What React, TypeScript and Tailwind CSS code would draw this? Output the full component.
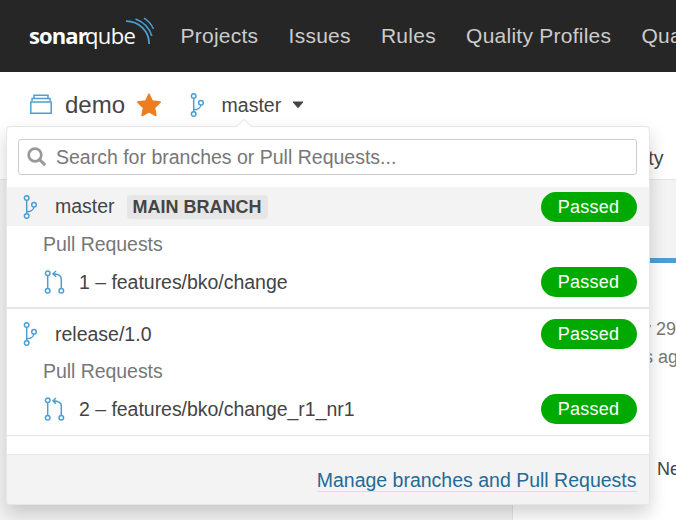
import React from "react";

const font = "font-['Liberation_Sans',Arial,sans-serif]";

function BranchIcon() {
  return (
    <svg width="24" height="24" viewBox="0 0 24 24" fill="none" stroke="#4b9fd5" strokeWidth="1.5" className="shrink-0">
      <circle cx="7.7" cy="3" r="2.3" />
      <circle cx="15" cy="9.7" r="2.3" />
      <circle cx="7.7" cy="21" r="2.3" />
      <path d="M7.7 5.3V18.7M14.9 12C14.6 15 11 16.7 7.7 16.8" />
    </svg>
  );
}

function PullRequestIcon() {
  return (
    <svg width="24" height="24" viewBox="0 0 24 24" fill="none" stroke="#4b9fd5" strokeWidth="1.5" className="shrink-0">
      <circle cx="5.7" cy="3.3" r="2.3" />
      <circle cx="5.7" cy="20.7" r="2.3" />
      <circle cx="19.3" cy="20.7" r="2.3" />
      <path d="M5.7 5.6V18.4M19.3 18.4V9.2C19.3 5.5 16.5 4 11 3.8M14 1L11 3.8L14 6.7" />
    </svg>
  );
}

function Logo() {
  return (
    <div className="relative h-[40px] w-[128px] shrink-0 text-[22px] leading-[43px] text-white font-['Open_Sans','Noto_Sans',sans-serif]">
      <div className="flex">
        <span className="w-[56px] font-bold tracking-[-0.9px]">sonar</span>
        <span className="tracking-[-0.6px]">qube</span>
      </div>
      <svg className="absolute left-[96px] top-[2px]" width="30" height="30" viewBox="0 0 30 30" fill="none" stroke="#4b9fd5">
        <path d="M1 5.2C14 5.2 24 15 24.2 28" strokeWidth="1.8" />
        <path d="M10.5 3C18.5 6 24.5 12 26.8 20" strokeWidth="1.6" />
        <path d="M19 2.2C23.3 4.8 26.5 8.5 28.5 13" strokeWidth="1.4" />
      </svg>
    </div>
  );
}

function Passed() {
  return (
    <span className="ml-auto mr-[12.5px] flex h-[30px] w-24 items-center justify-center rounded-full bg-[#00aa00] pt-px text-[18px] tracking-[0.22px] text-white">
      Passed
    </span>
  );
}

function BranchRow({ name, main = false }: { name: string; main?: boolean }) {
  return (
    <li className={main ? "flex h-[39px] items-center bg-[#f3f3f3] pl-3" : "flex h-[39px] items-center pl-3"}>
      <BranchIcon />
      <span className={main ? "ml-3 pt-px text-[19.5px]" : "ml-3 pt-[2px] text-[19.5px]"}>{name}</span>
      {main && (
        <span className="ml-3 flex h-6 w-[141px] items-center justify-center rounded-[4px] bg-[#e6e6e6] pt-px text-[18px] font-bold">
          MAIN BRANCH
        </span>
      )}
      <Passed />
    </li>
  );
}

function PullRequestRow({ name }: { name: string }) {
  return (
    <li className="flex h-[38px] items-center pl-[35px]">
      <PullRequestIcon />
      <span className="ml-[13px] pt-px text-[19.5px] tracking-[-0.03px]">{name}</span>
      <Passed />
    </li>
  );
}

function GroupLabel() {
  return <li className="flex h-[37px] items-center pl-9 text-[19.5px] tracking-[-0.05px] text-[#777]">Pull Requests</li>;
}

function BranchMenu() {
  return (
    <div className="absolute left-[6px] top-[126px] h-[379px] w-[644px] rounded-[4px] border border-[#e6e6e6] bg-white shadow-[0_9px_18px_rgba(0,0,0,0.175)]">
      <svg className="absolute left-[229px] top-[-8px]" width="16" height="9" viewBox="0 0 16 9">
        <path d="M0 8L8 .5L16 8V9H0Z" fill="#fff" />
        <path d="M0 8L8 .5L16 8" fill="none" stroke="#e1e1e1" />
      </svg>
      <div className="ml-[11px] mr-[12px] mt-3 flex h-9 items-center rounded-[3px] border border-[#cdcdcd] pl-[8px]">
        <svg width="20" height="20" viewBox="0 0 20 20" fill="none" stroke="#999">
          <circle cx="8" cy="8" r="6.3" strokeWidth="2.7" />
          <path d="M12.6 12.6L17.3 17.3" strokeWidth="3" strokeLinecap="round" />
        </svg>
        <span className="ml-[9px] pt-px text-[19.5px] text-[#777]">Search for branches or Pull Requests...</span>
      </div>
      <ul className="mt-3">
        <BranchRow name="master" main />
        <GroupLabel />
        <PullRequestRow name="1 – features/bko/change" />
        <li className="mt-[6px] mb-[5px] h-[2px] bg-[#e6e6e6]" />
        <BranchRow name="release/1.0" />
        <GroupLabel />
        <PullRequestRow name="2 – features/bko/change_r1_nr1" />
        <li className="mt-[7px] h-px bg-[#e6e6e6]" />
      </ul>
      <div className="mt-[18px] flex h-[50px] items-center justify-end rounded-b-[3px] border-t border-[#e6e6e6] bg-[#f3f3f3] pr-[12.5px] pt-px">
        <a className="border-b border-[#cae3f2] text-[19.5px] leading-[22px] text-[#236a97]">Manage branches and Pull Requests</a>
      </div>
    </div>
  );
}

export default function App() {
  return (
    <div className={`relative flex h-[520px] w-[676px] flex-col overflow-hidden bg-white text-[#444] ${font}`}>
      <header className="flex h-[72px] shrink-0 items-start bg-[#262626] pl-[29px]">
        <div className="mt-[14px]"><Logo /></div>
        <nav className="ml-[23.5px] flex h-[72px] items-center gap-[30.2px] whitespace-nowrap text-[21px] tracking-[0.25px] text-[#ccc]">
          <span>Projects</span>
          <span>Issues</span>
          <span>Rules</span>
          <span>Quality Profiles</span>
          <span>Quality Gates</span>
        </nav>
      </header>
      <section className="flex h-[108px] shrink-0 flex-col border-b border-[#e6e6e6]">
        <div className="flex h-[66px] items-center pl-[29px]">
          <svg width="24" height="24" viewBox="0 0 24 24" fill="none" stroke="#4b9fd5" strokeWidth="1.5">
            <path d="M1.8 9H22.2V20.3H1.8ZM3 8V5.5H21V8M5 5V2.2H19V5" />
          </svg>
          <span className="ml-3 text-[24px]">demo</span>
          <svg className="ml-3" width="24" height="24" viewBox="0 0 24 24" fill="#ed7d20" stroke="#ed7d20" strokeWidth="1.5" strokeLinejoin="round">
            <path d="M12 1.2L15.3 8L23.2 9.1L17.5 14.6L18.9 22.5L12 18.8L5.1 22.5L6.5 14.6L.8 9.1L8.7 8Z" />
          </svg>
          <div className="ml-[24.5px]"><BranchIcon /></div>
          <span className="ml-3 pt-px text-[19.5px]">master</span>
          <svg className="ml-[11px]" width="12" height="8" viewBox="0 0 12 8"><path d="M1 1H11L6 6.7Z" fill="#444" stroke="#444" strokeLinejoin="round" /></svg>
        </div>
        <span className="mr-[12.5px] mt-[9px] self-end text-[19.5px] leading-[22px]">Activity</span>
      </section>
      <main className="flex flex-1 bg-[#f3f3f3]">
        <div className="w-[512px] shrink-0" />
        <div className="flex flex-1 flex-col border-l border-[#e6e6e6]">
          <div className="h-[78px] shrink-0" />
          <div className="flex-1 border-t-[5px] border-[#4b9fd5] bg-white pt-[52px] text-[18px] leading-[28px] text-[#777]">
            <div className="flex w-[163px] justify-end whitespace-nowrap">July 29</div>
            <div className="flex w-[175px] justify-end whitespace-nowrap">8 hours ago</div>
            <div className="ml-[144px] mt-[84px] whitespace-nowrap text-[#444]">New</div>
          </div>
        </div>
      </main>
      <BranchMenu />
    </div>
  );
}
